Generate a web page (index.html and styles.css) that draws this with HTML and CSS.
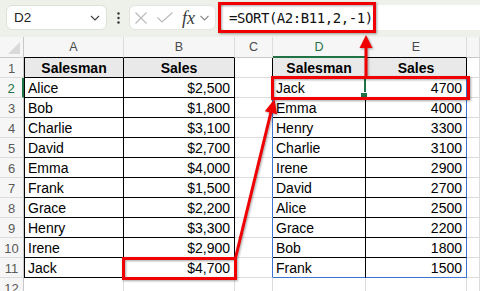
FILE: index.html
```
<!DOCTYPE html>
<html>
<head>
<meta charset="utf-8">
<link rel="stylesheet" href="styles.css">
</head>
<body>
<div class="app">
  <div class="fbar">
    <div class="namebox">
      <span class="ref">D2</span>
      <svg class="chev" width="10" height="6" viewBox="0 0 10 6"><path d="M1 1 L5 5 L9 1" fill="none" stroke="#444" stroke-width="1.2"/></svg>
    </div>
    <div class="dots"><svg width="3" height="12" viewBox="0 0 3 12"><circle cx="1.5" cy="1.5" r="1.2" fill="#333"/><circle cx="1.5" cy="6" r="1.2" fill="#333"/><circle cx="1.5" cy="10.5" r="1.2" fill="#333"/></svg></div>
    <div class="fbtns">
      <svg class="ic-x" width="12" height="12" viewBox="0 0 12 12"><path d="M0.5 0.5 L11.5 11.5 M11.5 0.5 L0.5 11.5" stroke="#b9b9b9" stroke-width="1.1"/></svg>
      <svg class="ic-ok" width="16" height="11" viewBox="0 0 16 11"><path d="M0.5 5.5 L5 10 L15.5 0.5" fill="none" stroke="#b9b9b9" stroke-width="1.1"/></svg>
      <span class="fx">fx</span>
      <svg class="chev2" width="9" height="6" viewBox="0 0 9 6"><path d="M0.5 1 L4.5 5 L8.5 1" fill="none" stroke="#888" stroke-width="1.1"/></svg>
    </div>
    <div class="finput"><span class="formula">=SORT(A2:B11,2,-1)</span></div>
  </div>

  <div class="sheet">
    <div class="corner"><svg width="12" height="12" viewBox="0 0 12 12"><path d="M12 0 L12 12 L0 12 Z" fill="#d9d9d9"/></svg></div>
    <div class="ch kb">A</div>
    <div class="ch kb">B</div>
    <div class="ch">C</div>
    <div class="ch chact">D</div>
    <div class="ch kb">E</div>
    <div class="ch"></div>

    <div class="rh">1</div>
    <div class="c k kl hd">Salesman</div>
    <div class="c k hd">Sales</div>
    <div class="c kr"></div>
    <div class="c k hd">Salesman</div>
    <div class="c k hd">Sales</div>
    <div class="c"></div>

    <div class="rh rhact">2</div>
    <div class="c k kl">Alice</div>
    <div class="c k num">$2,500</div>
    <div class="c br"></div>
    <div class="c k act">Jack</div>
    <div class="c k br num">4700</div>
    <div class="c"></div>

    <div class="rh">3</div>
    <div class="c k kl">Bob</div>
    <div class="c k num">$1,800</div>
    <div class="c br"></div>
    <div class="c k">Emma</div>
    <div class="c k br num">4000</div>
    <div class="c"></div>

    <div class="rh">4</div>
    <div class="c k kl">Charlie</div>
    <div class="c k num">$3,100</div>
    <div class="c br"></div>
    <div class="c k">Henry</div>
    <div class="c k br num">3300</div>
    <div class="c"></div>

    <div class="rh">5</div>
    <div class="c k kl">David</div>
    <div class="c k num">$2,700</div>
    <div class="c br"></div>
    <div class="c k">Charlie</div>
    <div class="c k br num">3100</div>
    <div class="c"></div>

    <div class="rh">6</div>
    <div class="c k kl">Emma</div>
    <div class="c k num">$4,000</div>
    <div class="c br"></div>
    <div class="c k">Irene</div>
    <div class="c k br num">2900</div>
    <div class="c"></div>

    <div class="rh">7</div>
    <div class="c k kl">Frank</div>
    <div class="c k num">$1,500</div>
    <div class="c br"></div>
    <div class="c k">David</div>
    <div class="c k br num">2700</div>
    <div class="c"></div>

    <div class="rh">8</div>
    <div class="c k kl">Grace</div>
    <div class="c k num">$2,200</div>
    <div class="c br"></div>
    <div class="c k">Alice</div>
    <div class="c k br num">2500</div>
    <div class="c"></div>

    <div class="rh">9</div>
    <div class="c k kl">Henry</div>
    <div class="c k num">$3,300</div>
    <div class="c br"></div>
    <div class="c k">Grace</div>
    <div class="c k br num">2200</div>
    <div class="c"></div>

    <div class="rh">10</div>
    <div class="c k kl">Irene</div>
    <div class="c k num">$2,900</div>
    <div class="c br"></div>
    <div class="c k">Bob</div>
    <div class="c k br num">1800</div>
    <div class="c"></div>

    <div class="rh">11</div>
    <div class="c k kl">Jack</div>
    <div class="c k num">$4,700</div>
    <div class="c br"></div>
    <div class="c k bb">Frank</div>
    <div class="c k br bb num">1500</div>
    <div class="c"></div>

    <div class="rh">12</div>
    <div class="c"></div>
    <div class="c"></div>
    <div class="c"></div>
    <div class="c"></div>
    <div class="c"></div>
    <div class="c"></div>
  </div>

  <svg class="annot" width="480" height="291" viewBox="0 0 480 291">
    <g class="red">
      <rect x="219.5" y="3.5" width="155" height="28" fill="none" stroke="#f00000" stroke-width="3"/>
      <rect x="272.5" y="77.5" width="196" height="21" fill="none" stroke="#f00000" stroke-width="3"/>
      <rect x="123.5" y="258.5" width="112" height="20" fill="none" stroke="#f00000" stroke-width="3"/>
      <line x1="366" y1="76" x2="366" y2="46" stroke="#f00000" stroke-width="3"/>
      <polygon points="366,35 359.5,48 372.5,48" fill="#f00000"/>
      <line x1="235.5" y1="258" x2="271" y2="112" stroke="#f00000" stroke-width="3"/>
      <polygon points="274.5,99 264.8,111.2 277,114.2" fill="#f00000"/>
    </g>
  </svg>
</div>
</body>
</html>
```
FILE: styles.css
```
* { box-sizing: border-box; }
html, body { margin: 0; padding: 0; }
body {
  width: 480px;
  height: 291px;
  overflow: hidden;
  background: #ffffff;
  font-family: "Liberation Sans", Arial, sans-serif;
}
.app { position: relative; width: 480px; height: 291px; overflow: hidden; }

.fbar {
  height: 37px;
  background: #edf1e9;
  display: flex;
  align-items: flex-start;
  padding: 5px 0 0 6px;
}
.namebox {
  width: 101px;
  height: 25px;
  background: #fff;
  border: 1px solid #dde2d8;
  border-radius: 6px;
  display: flex;
  align-items: center;
  justify-content: space-between;
  padding: 0 6px 0 7px;
}
.ref { font-size: 13.5px; color: #222; }
.dots {
  width: 22px;
  height: 25px;
  display: flex;
  align-items: center;
  justify-content: center;
}
.fbtns {
  width: 87px;
  height: 25px;
  background: #fff;
  border: 1px solid #e3e6e0;
  border-radius: 6px;
  display: flex;
  align-items: center;
  padding-left: 5px;
}
.ic-ok { margin-left: 10px; }
.fx {
  font-family: "Liberation Serif", "DejaVu Serif", serif;
  font-style: italic;
  font-size: 18px;
  color: #3a3a3a;
  margin-left: 9px;
  line-height: 1;
}
.chev2 { margin-left: 5px; }
.finput {
  flex: 1;
  height: 25px;
  margin-left: 4px;
  background: #fff;
  border-radius: 6px 0 0 6px;
  display: flex;
  align-items: center;
  padding-left: 9px;
}
.formula {
  font-family: "DejaVu Sans Mono", "Liberation Mono", monospace;
  font-size: 14px;
  letter-spacing: -0.45px;
  color: #111;
}

.sheet {
  display: grid;
  grid-template-columns: 24px 100px 111px 38px 93px 101px 1fr;
  grid-template-rows: 21px;
  grid-auto-rows: 20px;
  font-size: 14px;
  color: #000;
}
.corner {
  background: #f6f6f6;
  border-right: 1px solid #c8c8c8;
  border-bottom: 1px solid #c8c8c8;
  display: flex;
  align-items: flex-end;
  justify-content: flex-end;
  padding: 0 3px 3px 0;
}
.ch {
  background: #f6f6f6;
  border-right: 1px solid #dcdcdc;
  border-bottom: 1px solid #c8c8c8;
  text-align: center;
  font-size: 12.5px;
  line-height: 20px;
  color: #4a4a4a;
}
.ch.kb { border-bottom-color: #000; }
.ch.chact {
  color: #217346;
  border-bottom: 2px solid #217346;
}
.rh {
  background: #f6f6f6;
  border-right: 1px solid #c8c8c8;
  border-bottom: 1px solid #dcdcdc;
  text-align: center;
  font-size: 13px;
  line-height: 19px;
  padding-top: 1px;
  color: #5a5a5a;
}
.rh.rhact {
  color: #217346;
  border-right: 2px solid #217346;
}
.c {
  border-right: 1px solid #dcdcdc;
  border-bottom: 1px solid #dcdcdc;
  padding: 1px 3px 0 3px;
  line-height: 18px;
  white-space: nowrap;
  overflow: visible;
}
.c.k { border-right-color: #000; border-bottom-color: #000; }
.c.kl { box-shadow: inset 1px 0 0 #000; padding-left: 4px; }
.c.kr { border-right-color: #000; }
.c.br { border-right-color: #3b74d1; }
.c.bb { border-bottom-color: #3b74d1; }
.c.hd {
  background: #e9e9e9;
  font-weight: bold;
  text-align: center;
}
.c.num { text-align: right; padding-right: 4px; }
.c.act {
  position: relative;
  border-right: 2px solid #217346;
}
.c.act::after {
  content: "";
  position: absolute;
  right: -4px;
  bottom: -3px;
  width: 6px;
  height: 6px;
  background: #217346;
  border: 1px solid #fff;
}

.annot {
  position: absolute;
  left: 0;
  top: 0;
  pointer-events: none;
}
.red { filter: drop-shadow(1px 1px 1px rgba(0,0,0,0.35)); }
```
